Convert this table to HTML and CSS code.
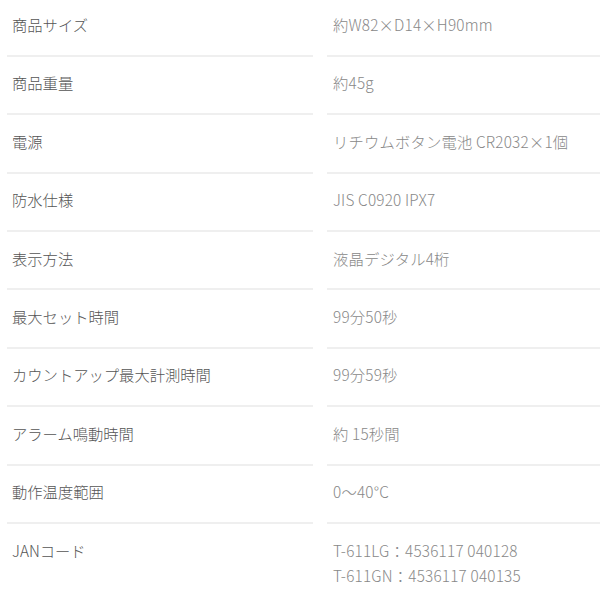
FILE: index.html
```html
<!DOCTYPE html>
<html lang="ja">
<head>
<meta charset="utf-8">
<link rel="stylesheet" href="styles.css">
</head>
<body>
<div class="spec">
  <div class="k">商品サイズ</div><div class="v">約W82×D14×H90mm</div>
  <div class="k">商品重量</div><div class="v">約45g</div>
  <div class="k">電源</div><div class="v">リチウムボタン電池 CR2032×1個</div>
  <div class="k">防水仕様</div><div class="v">JIS C0920 IPX7</div>
  <div class="k">表示方法</div><div class="v">液晶デジタル4桁</div>
  <div class="k">最大セット時間</div><div class="v">99分50秒</div>
  <div class="k">カウントアップ最大計測時間</div><div class="v">99分59秒</div>
  <div class="k">アラーム鳴動時間</div><div class="v">約 15秒間</div>
  <div class="k">動作温度範囲</div><div class="v">0～40°C</div>
  <div class="k last">JANコード</div><div class="v last">T-611LG：4536117 040128<br>T-611GN：4536117 040135</div>
</div>
</body>
</html>
```
FILE: styles.css
```css
html, body {
  margin: 0;
  padding: 0;
  background: #fff;
}
body {
  font-family: "Noto Sans CJK JP", "Noto Sans", sans-serif;
  font-size: 15.3px;
  font-weight: 300;
  line-height: 25px;
  overflow: hidden;
}
.spec {
  display: grid;
  grid-template-columns: 306px 1fr;
  column-gap: 14px;
  margin-top: -1.5px;
  padding-left: 7px;
}
.k, .v {
  padding: 13.6px 0 17.8px;
  border-bottom: 2px solid #efefef;
}
.k {
  padding-left: 5px;
  color: #555;
}
.v {
  padding-left: 6px;
  color: #888;
  letter-spacing: 0.2px;
}
.last {
  border-bottom: none;
}
```
